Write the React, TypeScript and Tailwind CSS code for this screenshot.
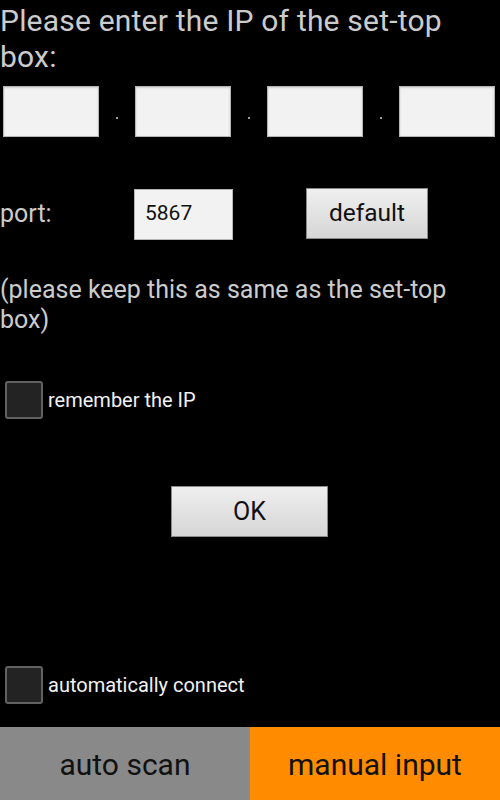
import React from 'react';

const FONT = { fontFamily: 'Roboto, "Noto Sans", sans-serif' };

function IpBox() {
  return (
    <div className="w-[96px] h-[51px] bg-[#f2f2f2] border border-[#b5b5b5] shadow-[inset_0_1px_2px_rgba(0,0,0,0.15)]" />
  );
}

function Dot() {
  return (
    <div className="w-[36px] h-[51px] flex items-end justify-center pb-[18px]">
      <span className="block w-[2px] h-[2px] bg-[#9a9a9a]" />
    </div>
  );
}

function CheckRow({ label }: { label: string }) {
  return (
    <div className="flex items-center pl-[5px]">
      <div className="w-[38px] h-[38px] rounded-[3px] border-2 border-[#626262] bg-[#232323]" />
      <span className="ml-[5px] text-[20px] leading-[30px] text-[#f2f2f2]">{label}</span>
    </div>
  );
}

export default function App() {
  return (
    <div className="w-[500px] h-[800px] bg-black flex flex-col overflow-hidden" style={FONT}>
      {/* Title */}
      <p className="w-[470px] pt-[3px] text-[30px] leading-[36px] tracking-[0.2px] text-[#cccccc]">
        Please enter the IP of the set-top box:
      </p>

      {/* IP inputs */}
      <div className="mt-[11px] flex pl-[3px]">
        <IpBox />
        <Dot />
        <IpBox />
        <Dot />
        <IpBox />
        <Dot />
        <IpBox />
      </div>

      {/* Port row */}
      <div className="mt-[51px] flex items-center h-[52px]">
        <span className="w-[134px] text-[25px] text-[#cccccc]">port:</span>
        <div className="w-[99px] h-[51px] bg-[#f2f2f2] border border-[#b5b5b5] flex items-center pl-[10px] text-[21px] text-[#111111]">
          5867
        </div>
        <button className="ml-[73px] w-[122px] h-[51px] -mt-[2px] border border-[#8a8a8a] bg-gradient-to-b from-[#efefef] to-[#d6d6d6] text-[24.5px] text-[#111111]">
          default
        </button>
      </div>

      {/* Note */}
      <p className="w-[470px] mt-[35px] text-[25px] leading-[30px] text-[#cccccc]">
        (please keep this as same as the set-top box)
      </p>

      <div className="mt-[46px]">
        <CheckRow label="remember the IP" />
      </div>

      {/* OK */}
      <div className="mt-[67px] flex pl-[171px]">
        <button className="w-[157px] h-[51px] border border-[#8a8a8a] bg-gradient-to-b from-[#efefef] to-[#d6d6d6] text-[25px] text-[#111111]">
          OK
        </button>
      </div>

      <div className="flex-1" />

      <div className="mb-[23px]">
        <CheckRow label="automatically connect" />
      </div>

      {/* Bottom tabs */}
      <div className="h-[73px] flex">
        <div className="w-[250px] bg-[#898989] flex items-center justify-center pt-[2px] text-[30px] text-[#111111]">
          auto scan
        </div>
        <div className="w-[250px] bg-[#ff8c00] flex items-center justify-center pt-[2px] text-[30px] text-[#111111]">
          manual input
        </div>
      </div>
    </div>
  );
}
